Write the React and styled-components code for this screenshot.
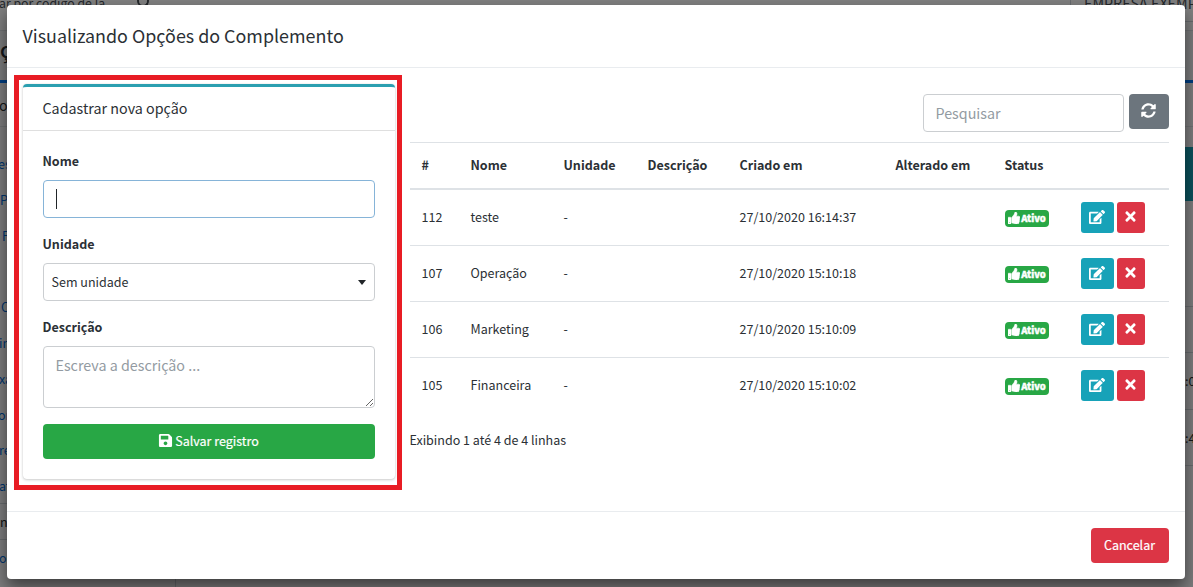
import React from "react";
import styled, { createGlobalStyle } from "styled-components";
import { FaThumbsUp, FaEdit, FaTimes, FaSave, FaSyncAlt } from "react-icons/fa";

const GlobalStyle = createGlobalStyle`
  *, *::before, *::after { box-sizing: border-box; }
  html, body { margin: 0; height: 100%; overflow: hidden; }
  body, input, textarea, button {
    font-family: "Noto Sans CJK JP", "Noto Sans", sans-serif;
    font-size: 12.53px;
    line-height: 21px;
    color: #2b3035;
  }
`;

const Screen = styled.div`
  position: relative;
  width: 1193px;
  height: 587px;
  overflow: hidden;
  background: #f4f6f9;
`;

const Page = styled.div`
  height: 100%;
  display: flex;
  flex-direction: column;
`;

const TopBar = styled.div`
  height: 31px;
  display: flex;
  justify-content: space-between;
  background: #fff;
  border-bottom: 1px solid #dee2e6;
  font-size: 14.3px;
  line-height: 6px;
  white-space: nowrap;
  color: #495057;
`;

const SearchHint = styled.div`
  display: flex;
  gap: 30px;
  margin-left: -1px;
  font-size: 12.3px;
  svg { margin-top: -8px; }
`;

const Company = styled.div`
  width: 123px;
  height: 22px;
  padding-left: 13px;
  border-left: 1px solid #ced4da;
  border-bottom: 1px solid #ced4da;
`;

const Crumbs = styled.div`
  height: 49px;
  padding-top: 4px;
  font-size: 21px;
  line-height: 28px;
  font-weight: 500;
`;

const Columns = styled.div`
  flex: 1;
  display: flex;
  justify-content: space-between;
  border-top: 3px solid #007bff;
  background: #f8f9fa;
`;

const Menu = styled.div`
  width: 176px;
  border-right: 1px solid #ced4da;
`;

const MenuHead = styled.div`
  height: 44px;
  padding-top: 11px;
  text-indent: -1px;
  font-size: 14.3px;
  border-bottom: 1px solid #dee2e6;
`;

const MenuList = styled.div`
  padding-top: 18px;
`;

const MenuItem = styled.div`
  height: 35.8px;
  line-height: 35px;
  text-indent: ${(p) => p.$shift || 0}px;
  color: ${(p) => (p.$plain ? "#212529" : "#0069d9")};
  border-top: 1px solid ${(p) => (p.$rule ? "#ced4da" : "transparent")};
`;

const Side = styled.div`
  width: 8px;
  padding-top: 43px;
`;

const SideTeal = styled.div`
  height: 75px;
  border-top: 1px solid #dee2e6;
  border-bottom: 54px solid #17a2b8;
`;

const SideRows = styled.div`
  margin-top: 105px;
  border-top: 1px solid #ced4da;
`;

const SideRow = styled.div`
  height: ${(p) => (p.$short ? 46 : 56.5)}px;
  border-bottom: 1px solid #ced4da;
  line-height: 55px;
  white-space: nowrap;
`;

const Backdrop = styled.div`
  position: absolute;
  inset: 0;
  padding: 5px 8px 8px 7px;
  background: rgba(0, 0, 0, 0.5);
`;

const Modal = styled.section`
  height: 574px;
  display: flex;
  flex-direction: column;
  background: #fff;
  border-radius: 4px;
  box-shadow: 0 8px 16px rgba(0, 0, 0, 0.5);
`;

const ModalHeader = styled.header`
  height: 63px;
  padding: 15px 15.5px;
  border-bottom: 1px solid #e9ecef;
  font-size: 17.9px;
  line-height: 30px;
`;

const ModalBody = styled.div`
  flex: 1;
  display: flex;
  align-items: flex-start;
  gap: 14px;
  padding: 16px 16px 0;
`;

const ModalFooter = styled.footer`
  height: 68px;
  display: flex;
  justify-content: flex-end;
  align-items: center;
  padding: 0 16px;
  border-top: 1px solid #e9ecef;
`;

const Card = styled.div`
  position: relative;
  width: 372px;
  height: 395px;
  margin-right: 1px;
  border-top: 3px solid #2b9fb0;
  border-radius: 4px;
  box-shadow: 0 0 1px rgba(0, 0, 0, 0.125), 0 1px 3px rgba(0, 0, 0, 0.2);

  &::after {
    content: "";
    position: absolute;
    inset: -12px -7px -11px -9px;
    border: 5px solid #e81c24;
    pointer-events: none;
  }
`;

const CardHeader = styled.div`
  height: 44px;
  padding: 9px 19.5px;
  border-bottom: 1px solid #dfdfdf;
  font-size: 14.3px;
  line-height: 24px;
`;

const Form = styled.div`
  display: flex;
  flex-direction: column;
  padding: 20px;
`;

const Label = styled.label`
  height: 29px;
  margin-left: -0.5px;
  line-height: 19px;
  font-weight: 700;
`;

const Control = styled.div`
  display: flex;
  align-items: center;
  justify-content: space-between;
  height: 38px;
  margin-bottom: 16px;
  padding: 0 8px 2px 7.5px;
  border: 1px solid ${(p) => (p.$focused ? "#86b4d8" : "#cbced1")};
  border-radius: 4px;
`;

const Caret = styled.span`
  width: 1px;
  height: 20px;
  margin: 2px 0 0 4.5px;
  background: #212529;
`;

const Arrow = styled.span`
  margin-top: 2px;
  border: 4px solid transparent;
  border-top: 5px solid #212529;
  border-bottom: 0;
`;

const TextArea = styled.textarea`
  height: 62px;
  margin: 0 0 16px;
  padding: 6px 11.5px;
  border: 1px solid #cbced1;
  border-radius: 4px;
  font-size: 14.3px;
  line-height: 24px;
  resize: vertical;
  &::placeholder { color: #939ba2; opacity: 1; }
`;

const tones = { green: "#28a745", red: "#dc3545", teal: "#17a2b8", gray: "#6c757d" };

const Button = styled.button`
  display: flex;
  align-items: center;
  justify-content: center;
  gap: 2px;
  width: ${(p) => p.$w || "auto"};
  height: ${(p) => (p.$small ? 31 : 35)}px;
  padding: 0 1px 2px 0;
  border: 0;
  border-radius: ${(p) => (p.$small ? 3 : 4)}px;
  background: ${(p) => tones[p.$tone]};
  color: #fff;
  -webkit-text-stroke: 0.2px #fff;
`;

const Listing = styled.div`
  flex: 1;
  padding-top: 10px;
`;

const Toolbar = styled.div`
  display: flex;
  justify-content: flex-end;
  align-items: flex-start;
  gap: 5px;
  height: 48px;
`;

const Search = styled.input`
  width: 201px;
  height: 38px;
  padding: 0 12px 2px 11.5px;
  border: 1px solid #cbced1;
  border-radius: 4px;
  font-size: 14.3px;
  &::placeholder { color: #939ba2; opacity: 1; }
`;

const Row = styled.div`
  display: grid;
  grid-template-columns: 49px 93px 84px 92px 156px 109px 76px 100px;
  align-items: center;
  height: ${(p) => (p.$first ? 55 : 56)}px;
  border-top: ${(p) => (p.$first ? 0 : 1)}px solid #dee2e6;
`;

const HeadRow = styled(Row)`
  height: 48px;
  border-bottom: 2px solid #dee2e6;
  font-weight: 700;
`;

const Cell = styled.div`
  padding: 0 0 2px 11.5px;
  white-space: nowrap;
`;

const StatusCell = styled.div`
  padding: 2px 0 0 12px;
`;

const Actions = styled.div`
  display: flex;
  gap: 3px;
  padding-left: 12px;
`;

const Badge = styled.span`
  display: flex;
  align-items: center;
  justify-content: center;
  gap: 1px;
  width: 44px;
  height: 17px;
  border-radius: 4px;
  background: #28a745;
  color: #fff;
  font-size: 9.4px;
  font-weight: 900;
  line-height: 17px;
  -webkit-text-stroke: 0.4px #fff;
  svg { margin-top: -1px; stroke-width: 24px; }
`;

const Summary = styled.div`
  margin-left: -0.5px;
  padding-top: 16px;
`;

const menu = [
  { t: "es", s: -2 }, { t: "P" }, { t: "F", s: 2 }, { t: "" }, { t: "C", s: 1 },
  { t: "in", s: -1 }, { t: "xa", s: -1 }, { t: "or", s: -2 }, { t: "re", s: -1 },
  { t: "at", s: -1 }, { t: "n", plain: true, rule: true }, { t: "o", rule: true, s: -1 },
];

const records = [
  ["112", "teste", "27/10/2020 16:14:37"],
  ["107", "Operação", "27/10/2020 15:10:18"],
  ["106", "Marketing", "27/10/2020 15:10:09"],
  ["105", "Financeira", "27/10/2020 15:10:02"],
];

const heads = ["#", "Nome", "Unidade", "Descrição", "Criado em", "Alterado em", "Status", ""];

export default function App() {
  return (
    <Screen>
      <GlobalStyle />
      <Page>
        <TopBar>
          <SearchHint>
            <span>ar por código de la</span>
            <svg width="16" height="18" viewBox="0 0 16 18" fill="none" stroke="#495057" strokeWidth="2">
              <circle cx="8" cy="9" r="5" />
              <path d="M11 12l4 4" />
            </svg>
          </SearchHint>
          <Company>EMPRESA EXEMP</Company>
        </TopBar>
        <Crumbs>ç</Crumbs>
        <Columns>
          <Menu>
            <MenuHead>o</MenuHead>
            <MenuList>
              {menu.map((m, i) => (
                <MenuItem key={i} $shift={m.s} $plain={m.plain} $rule={m.rule}>{m.t}</MenuItem>
              ))}
            </MenuList>
          </Menu>
          <Side>
            <SideTeal />
            <SideRows>
              <SideRow $short />
              <SideRow>:0</SideRow>
              <SideRow>:4</SideRow>
            </SideRows>
          </Side>
        </Columns>
      </Page>
      <Backdrop>
        <Modal>
          <ModalHeader>Visualizando Opções do Complemento</ModalHeader>
          <ModalBody>
            <Card>
              <CardHeader>Cadastrar nova opção</CardHeader>
              <Form>
                <Label>Nome</Label>
                <Control $focused><Caret /></Control>
                <Label>Unidade</Label>
                <Control>Sem unidade<Arrow /></Control>
                <Label>Descrição</Label>
                <TextArea placeholder="Escreva a descrição ..." />
                <Button $tone="green"><FaSave size={15} />Salvar registro</Button>
              </Form>
            </Card>
            <Listing>
              <Toolbar>
                <Search placeholder="Pesquisar" />
                <Button $tone="gray" $w="40px"><FaSyncAlt size={15} /></Button>
              </Toolbar>
              <HeadRow>{heads.map((h, i) => <Cell key={i}>{h}</Cell>)}</HeadRow>
              {records.map(([id, name, created], i) => (
                <Row key={id} $first={i === 0}>
                  <Cell>{id}</Cell>
                  <Cell>{name}</Cell>
                  <Cell>-</Cell>
                  <Cell />
                  <Cell>{created}</Cell>
                  <Cell />
                  <StatusCell><Badge><FaThumbsUp size={12} />Ativo</Badge></StatusCell>
                  <Actions>
                    <Button $tone="teal" $small $w="33px"><FaEdit size={16} /></Button>
                    <Button $tone="red" $small $w="28px"><FaTimes size={15} /></Button>
                  </Actions>
                </Row>
              ))}
              <Summary>Exibindo 1 até 4 de 4 linhas</Summary>
            </Listing>
          </ModalBody>
          <ModalFooter>
            <Button $tone="red" $w="78px">Cancelar</Button>
          </ModalFooter>
        </Modal>
      </Backdrop>
    </Screen>
  );
}
